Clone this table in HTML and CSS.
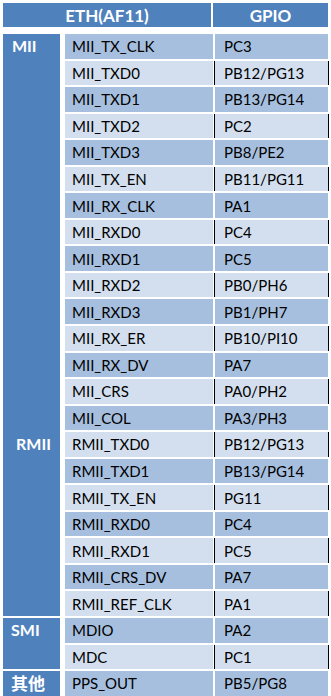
FILE: index.html
```html
<!DOCTYPE html>
<html>
<head>
<meta charset="utf-8">
<link rel="stylesheet" href="styles.css">
</head>
<body>
<div class="tbl">
  <div class="hd hd-eth">ETH(AF11)</div>
  <div class="hd hd-gpio">GPIO</div>

  <div class="grp grp-mii">MII</div>
  <div class="grp grp-rmii">RMII</div>
  <div class="grp grp-smi">SMI</div>
  <div class="grp grp-other">其他</div>

  <div class="sig dk">MII_TX_CLK</div><div class="gpio dk">PC3</div>
  <div class="sig lt">MII_TXD0</div><div class="gpio lt">PB12/PG13</div>
  <div class="sig dk">MII_TXD1</div><div class="gpio dk">PB13/PG14</div>
  <div class="sig lt">MII_TXD2</div><div class="gpio lt">PC2</div>
  <div class="sig dk">MII_TXD3</div><div class="gpio dk">PB8/PE2</div>
  <div class="sig lt">MII_TX_EN</div><div class="gpio lt">PB11/PG11</div>
  <div class="sig dk">MII_RX_CLK</div><div class="gpio dk">PA1</div>
  <div class="sig lt">MII_RXD0</div><div class="gpio lt">PC4</div>
  <div class="sig dk">MII_RXD1</div><div class="gpio dk">PC5</div>
  <div class="sig lt">MII_RXD2</div><div class="gpio lt">PB0/PH6</div>
  <div class="sig dk">MII_RXD3</div><div class="gpio dk">PB1/PH7</div>
  <div class="sig lt">MII_RX_ER</div><div class="gpio lt">PB10/PI10</div>
  <div class="sig dk">MII_RX_DV</div><div class="gpio dk">PA7</div>
  <div class="sig lt">MII_CRS</div><div class="gpio lt">PA0/PH2</div>
  <div class="sig dk">MII_COL</div><div class="gpio dk">PA3/PH3</div>
  <div class="sig lt">RMII_TXD0</div><div class="gpio lt">PB12/PG13</div>
  <div class="sig dk">RMII_TXD1</div><div class="gpio dk">PB13/PG14</div>
  <div class="sig lt">RMII_TX_EN</div><div class="gpio lt">PG11</div>
  <div class="sig dk">RMII_RXD0</div><div class="gpio dk">PC4</div>
  <div class="sig lt">RMII_RXD1</div><div class="gpio lt">PC5</div>
  <div class="sig dk">RMII_CRS_DV</div><div class="gpio dk">PA7</div>
  <div class="sig lt">RMII_REF_CLK</div><div class="gpio lt">PA1</div>
  <div class="sig dk">MDIO</div><div class="gpio dk">PA2</div>
  <div class="sig lt">MDC</div><div class="gpio lt">PC1</div>
  <div class="sig dk">PPS_OUT</div><div class="gpio dk">PB5/PG8</div>
</div>
</body>
</html>
```

FILE: styles.css
```css
html, body {
  margin: 0;
  padding: 0;
  background: #fff;
}
body {
  padding: 3px;
}
.tbl {
  display: grid;
  grid-template-columns: 57px 153px 115px;
  grid-template-rows: 29px;
  grid-auto-rows: 24.56px;
  row-gap: 2px;
  width: 325px;
  font-family: Lato, "Noto Sans CJK SC", sans-serif;
  font-size: 15px;
  color: #000;
}
.hd {
  background: #4f81bd;
  color: #fff;
  font-weight: bold;
  font-size: 17px;
  display: flex;
  align-items: center;
  justify-content: center;
  height: 24px;
  grid-row: 1;
}
.hd-eth {
  grid-column: 1 / span 2;
  margin-right: 2px;
}
.hd-gpio {
  grid-column: 3;
}
.grp {
  grid-column: 1;
  background: #4f81bd;
  color: #fff;
  font-weight: bold;
  font-size: 16px;
  padding-left: 9px;
  line-height: 24px;
}
.grp-mii { grid-row: 2 / span 15; margin-bottom: -2px; }
.grp-rmii { grid-row: 17 / span 7; padding-left: 13px; }
.grp-smi { grid-row: 24 / span 2; padding-left: 8px; }
.grp-other { grid-row: 26 / span 1; padding-left: 8px; font-family: "Noto Sans CJK SC", sans-serif; font-size: 17px; }
.sig, .gpio {
  display: flex;
  align-items: center;
}
.sig {
  grid-column: 2;
  margin-left: 5px;
  padding-left: 7px;
}
.gpio {
  grid-column: 3;
  margin-left: 2px;
  padding-left: 9px;
}
.dk { background: #a7bfde; }
.lt { background: #d3dfee; }
.gpio.lt { box-shadow: -1px 0 0 #000, 1px 0 0 #000; }
```
